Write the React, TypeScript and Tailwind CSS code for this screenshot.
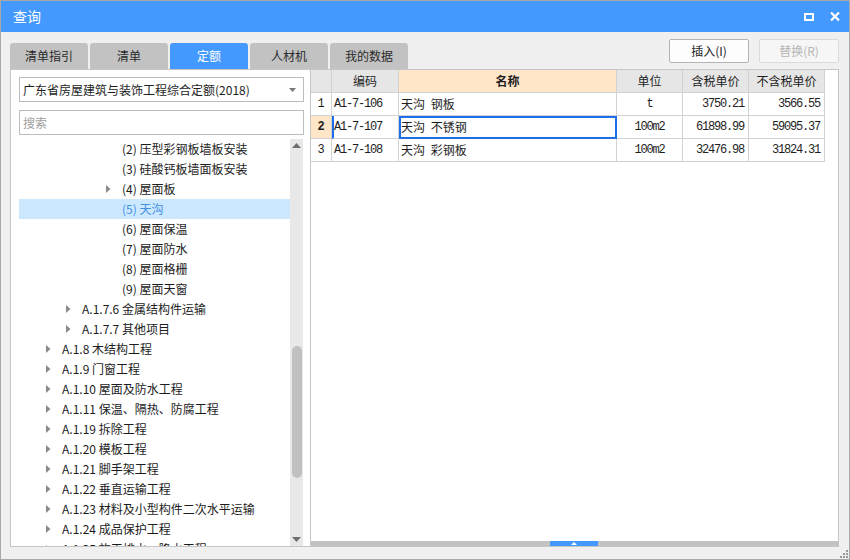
import React from "react";

type TreeRow = { level: 0 | 1 | 3; text: string; arrow?: boolean; selected?: boolean };

const treeRows: TreeRow[] = [
  { level: 3, text: "(2) 压型彩钢板墙板安装" },
  { level: 3, text: "(3) 硅酸钙板墙面板安装" },
  { level: 3, text: "(4) 屋面板", arrow: true },
  { level: 3, text: "(5) 天沟", selected: true },
  { level: 3, text: "(6) 屋面保温" },
  { level: 3, text: "(7) 屋面防水" },
  { level: 3, text: "(8) 屋面格栅" },
  { level: 3, text: "(9) 屋面天窗" },
  { level: 1, text: "A.1.7.6 金属结构件运输", arrow: true },
  { level: 1, text: "A.1.7.7 其他项目", arrow: true },
  { level: 0, text: "A.1.8 木结构工程", arrow: true },
  { level: 0, text: "A.1.9 门窗工程", arrow: true },
  { level: 0, text: "A.1.10 屋面及防水工程", arrow: true },
  { level: 0, text: "A.1.11 保温、隔热、防腐工程", arrow: true },
  { level: 0, text: "A.1.19 拆除工程", arrow: true },
  { level: 0, text: "A.1.20 模板工程", arrow: true },
  { level: 0, text: "A.1.21 脚手架工程", arrow: true },
  { level: 0, text: "A.1.22 垂直运输工程", arrow: true },
  { level: 0, text: "A.1.23 材料及小型构件二次水平运输", arrow: true },
  { level: 0, text: "A.1.24 成品保护工程", arrow: true },
  { level: 0, text: "A.1.25 施工排水、降水工程", arrow: true },
];

const indent: Record<number, string> = {
  0: "pl-[27px]",
  1: "pl-[47px]",
  3: "pl-[87px]",
};

const rows = [
  { n: "1", code: "A1-7-106", name: "天沟 钢板", unit: "t", tax: "3750.21", notax: "3566.55" },
  { n: "2", code: "A1-7-107", name: "天沟 不锈钢", unit: "100m2", tax: "61898.99", notax: "59095.37", active: true },
  { n: "3", code: "A1-7-108", name: "天沟 彩钢板", unit: "100m2", tax: "32476.98", notax: "31824.31" },
];

const tabs = ["清单指引", "清单", "定额", "人材机", "我的数据"];

function Triangle() {
  return (
    <svg width="5" height="8" viewBox="0 0 5 8" className="block">
      <path d="M0 0 L4.5 4 L0 8 Z" fill="#8a8a8a" />
    </svg>
  );
}

function TitleBar() {
  return (
    <div className="h-[31px] bg-[#4499fe] flex items-center justify-between pl-[12px] pr-[9px] text-white">
      <span className="text-[14px]">查询</span>
      <div className="flex items-center gap-[16px]">
        <div className="w-[10px] h-[8px] border-2 border-white" />
        <svg width="10" height="9" viewBox="0 0 10 9">
          <path d="M1 0.5 L9 8.5 M9 0.5 L1 8.5" stroke="white" strokeWidth="2.2" />
        </svg>
      </div>
    </div>
  );
}

function Toolbar() {
  return (
    <div className="mt-[7px] h-[30px] flex justify-between pl-[9px] pr-[10px]">
      <div className="flex gap-[2px] self-end">
        {tabs.map((t) =>
          t === "定额" ? (
            <div key={t} className="w-[78px] h-[26px] rounded-t-[3px] bg-[#4499fe] text-white text-[12px] flex items-center justify-center">
              {t}
            </div>
          ) : (
            <div key={t} className="w-[78px] h-[26px] rounded-t-[3px] bg-[#c2c2c2] text-[#2a2a2a] text-[12px] flex items-center justify-center">
              {t}
            </div>
          )
        )}
      </div>
      <div className="flex gap-[10px]">
        <button className="w-[80px] h-[24px] rounded-[2px] border border-[#b4b4b4] bg-[#fdfdfd] text-[12px] text-[#222]">插入(I)</button>
        <button className="w-[80px] h-[24px] rounded-[2px] border border-[#dadada] bg-[#f6f6f6] text-[12px] text-[#b5b5b5]">替换(R)</button>
      </div>
    </div>
  );
}

function LeftPanel() {
  return (
    <div className="w-[301px] flex flex-col border border-[#c6c6c6] bg-white">
      <div className="mt-[7px] ml-[8px] mr-[6px] h-[25px] border border-[#bdbdbd] bg-white flex items-center justify-between pl-[3px] pr-[7px] text-[12px] text-[#1e1e1e]">
        <span>广东省房屋建筑与装饰工程综合定额(2018)</span>
        <svg width="7" height="4" viewBox="0 0 7 4">
          <path d="M0 0 H7 L3.5 4 Z" fill="#777" />
        </svg>
      </div>
      <div className="mt-[8px] ml-[8px] mr-[6px] h-[25px] border border-[#bdbdbd] bg-white flex items-center pl-[3px] text-[12px] text-[#a0a0a0]">
        搜索
      </div>
      <div className="mt-[4px] ml-[8px] mr-[7px] flex-1 flex min-h-0">
        <div className="flex-1 overflow-hidden">
          {treeRows.map((r) => (
            <div
              key={r.text}
              className={`h-[20px] flex items-center text-[12px] whitespace-nowrap ${indent[r.level]} ${
                r.selected ? "bg-[#cce8ff] text-[#3f8fe6]" : "text-[#1c1c1c]"
              }`}
            >
              <div className="w-[16px] flex items-center">{r.arrow ? <Triangle /> : null}</div>
              <span>{r.text}</span>
            </div>
          ))}
        </div>
        <div className="w-[13px] bg-[#e8e8e8] flex flex-col items-center">
          <svg width="9" height="5" viewBox="0 0 9 5" className="mt-[4px]">
            <path d="M0 5 L4.5 0 L9 5 Z" fill="#6e6e6e" />
          </svg>
          <div className="mt-[198px] w-[10px] h-[132px] rounded-full bg-[#c1c1c1]" />
          <div className="flex-1" />
          <svg width="9" height="5" viewBox="0 0 9 5" className="mb-[4px]">
            <path d="M0 0 L9 0 L4.5 5 Z" fill="#6e6e6e" />
          </svg>
        </div>
      </div>
    </div>
  );
}

const cell = "h-[23px] border-r border-b border-[#d2d2d2] flex items-center";

function RightPanel() {
  return (
    <div className="flex-1 flex flex-col border border-l-0 border-[#c6c6c6] bg-white">
      <div className="flex-1">
        <div className="grid grid-cols-[21px_67px_218px_66px_66px_76px] w-[514px] text-[12px] text-[#1e1e1e]">
          <div className={`${cell} bg-[#e6e6e6]`} />
          <div className={`${cell} bg-[#e6e6e6] justify-center`}>编码</div>
          <div className={`${cell} bg-[#ffe6c9] justify-center font-bold`}>名称</div>
          <div className={`${cell} bg-[#e6e6e6] justify-center`}>单位</div>
          <div className={`${cell} bg-[#e6e6e6] justify-center`}>含税单价</div>
          <div className={`${cell} bg-[#e6e6e6] justify-center`}>不含税单价</div>
          {rows.map((r) => (
            <React.Fragment key={r.n}>
              <div
                className={`${cell} justify-center font-['Liberation_Mono',monospace] ${
                  r.active ? "bg-[#ffe6c9] font-bold" : ""
                }`}
              >
                {r.n}
              </div>
              <div
                className={`${cell} font-['Liberation_Mono',monospace] tracking-[-1.2px] ${
                  r.active ? "border-l-2 border-l-[#1c6fe8] pl-0" : "pl-[2px]"
                }`}
              >
                {r.code}
              </div>
              <div
                className={`${cell} pl-[2px] [word-spacing:3px] ${
                  r.active ? "outline-2 -outline-offset-2 outline-[#1c6fe8]" : ""
                }`}
              >
                {r.name}
              </div>
              <div className={`${cell} justify-center font-['Liberation_Mono',monospace] tracking-[-1.2px]`}>{r.unit}</div>
              <div className={`${cell} justify-end pr-[4px] font-['Liberation_Mono',monospace] tracking-[-1.2px]`}>{r.tax}</div>
              <div className={`${cell} justify-end pr-[4px] font-['Liberation_Mono',monospace] tracking-[-1.2px]`}>{r.notax}</div>
            </React.Fragment>
          ))}
        </div>
      </div>
      <div className="relative h-[5px] bg-[#c2c2c2]">
        <div className="absolute left-[239px] top-0 w-[48px] h-[5px] bg-[#4499fe] flex items-center justify-center">
          <svg width="6" height="3" viewBox="0 0 6 3">
            <path d="M0 3 L3 0 L6 3 Z" fill="white" />
          </svg>
        </div>
      </div>
    </div>
  );
}

export default function App() {
  return (
    <div className="relative w-[850px] h-[560px] border border-[#a8a8a8] bg-[#f0f0f0] flex flex-col font-['Noto_Sans_CJK_SC',sans-serif]">
      <TitleBar />
      <Toolbar />
      <div className="h-[478px] ml-[9px] mr-[10px] flex">
        <LeftPanel />
        <RightPanel />
      </div>
      <svg width="8" height="8" viewBox="0 0 8 8" className="absolute right-[1px] bottom-[1px]">
        <rect x="6" y="0" width="2" height="2" fill="#9a9a9a" />
        <rect x="3" y="3" width="2" height="2" fill="#9a9a9a" />
        <rect x="6" y="3" width="2" height="2" fill="#9a9a9a" />
        <rect x="0" y="6" width="2" height="2" fill="#9a9a9a" />
        <rect x="3" y="6" width="2" height="2" fill="#9a9a9a" />
        <rect x="6" y="6" width="2" height="2" fill="#9a9a9a" />
      </svg>
    </div>
  );
}
